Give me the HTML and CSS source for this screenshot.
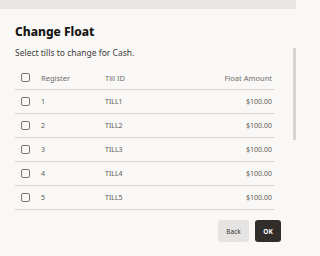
FILE: index.html
```html
<!DOCTYPE html>
<html>
<head>
<meta charset="utf-8">
<meta name="viewport" content="width=296">
<link rel="stylesheet" href="styles.css">
</head>
<body>
<div class="backdrop"></div>
<div class="dialog">
  <h1 class="title">Change Float</h1>
  <p class="subtitle">Select tills to change for Cash.</p>
  <div class="table">
    <div class="row head">
      <span class="cb"></span><span>Register</span><span>Till ID</span><span class="amt">Float Amount</span>
    </div>
    <div class="row"><span class="cb"></span><span>1</span><span>TILL1</span><span class="amt">$100.00</span></div>
    <div class="row"><span class="cb"></span><span>2</span><span>TILL2</span><span class="amt">$100.00</span></div>
    <div class="row"><span class="cb"></span><span>3</span><span>TILL3</span><span class="amt">$100.00</span></div>
    <div class="row"><span class="cb"></span><span>4</span><span>TILL4</span><span class="amt">$100.00</span></div>
    <div class="row"><span class="cb"></span><span>5</span><span>TILL5</span><span class="amt">$100.00</span></div>
  </div>
  <div class="actions">
    <button class="btn back">Back</button>
    <button class="btn ok">OK</button>
  </div>
  <div class="thumb"></div>
</div>
</body>
</html>
```
FILE: styles.css
```css
html {
  background: #f9f8f6;
}
html, body {
  margin: 0;
  padding: 0;
  font-family: "Noto Sans", "Open Sans", sans-serif;
}
body {
  width: 296px;
  height: 256px;
  overflow: hidden;
  background: #f9f8f6;
}
.backdrop {
  height: 9px;
  background: #e8e7e5;
}
.dialog {
  position: relative;
  width: 296px;
  background: #f9f8f6;
  height: 247px;
  padding: 15px 21px 0 15px;
  box-sizing: border-box;
}
.title {
  margin: 0;
  font-size: 12px;
  line-height: 15px;
  font-weight: 800;
  color: #161513;
}
.subtitle {
  margin: 8px 0 0 0;
  font-size: 8.5px;
  line-height: 12px;
  color: #3f3c39;
}
.table {
  margin-top: 7px;
}
.row {
  display: grid;
  grid-template-columns: 26px 64px 1fr auto;
  align-items: center;
  height: 24px;
  border-bottom: 1px solid #d9d7d4;
  box-sizing: border-box;
  font-size: 7px;
  color: #5b5855;
}
.row.head {
  font-size: 7.5px;
  color: #6f6c69;
}
.cb {
  width: 9px;
  height: 9px;
  margin-left: 6px;
  border: 1.2px solid #7b7875;
  border-radius: 2px;
  box-sizing: border-box;
}
.amt {
  text-align: right;
  padding-right: 3px;
}
.actions {
  display: flex;
  justify-content: flex-end;
  gap: 6px;
  margin-top: 10px;
  margin-right: -6px;
}
.btn {
  height: 22px;
  border: none;
  border-radius: 3px;
  font-family: "Noto Sans", sans-serif;
  font-size: 6.5px;
  padding: 0;
}
.back {
  width: 31px;
  background: #e5e4e2;
  color: #3a3734;
}
.ok {
  width: 26px;
  background: #312d2a;
  color: #ffffff;
  font-weight: 700;
}
.thumb {
  position: absolute;
  right: 0;
  top: 39px;
  width: 3px;
  height: 92px;
  background: #d6d5d3;
}
```
